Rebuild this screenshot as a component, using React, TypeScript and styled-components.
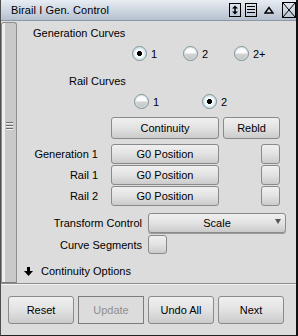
import React from 'react';
import styled, { createGlobalStyle } from 'styled-components';

const GlobalStyle = createGlobalStyle`
  html, body { margin: 0; padding: 0; background: #dcdcdc; }
  body {
    font-family: "Liberation Sans", Arial, sans-serif;
    font-size: 11px;
    color: #000;
  }
`;

const Window = styled.div`
  width: 298px;
  height: 336px;
  box-sizing: border-box;
  display: flex;
  flex-direction: column;
  background: #dcdcdc;
  border-left: 1px solid #4e4e4e;
  border-right: 2px solid #111;
  border-bottom: 1px solid #222;
  overflow: hidden;
`;

const TitleBar = styled.div`
  height: 21px;
  flex: none;
  box-sizing: border-box;
  display: flex;
  align-items: center;
  padding-left: 10px;
  background: linear-gradient(#e8edf3, #b5c0cf);
  border-bottom: 1px solid #8d97a5;
`;

const TitleText = styled.span`
  font-size: 11px;
  letter-spacing: 0.1px;
`;

const TitleIcons = styled.div`
  margin-left: auto;
  display: flex;
  align-items: center;
  height: 100%;
`;

const IconSlot = styled.span<{ $gap: number }>`
  display: flex;
  margin-left: ${p => p.$gap}px;
`;

const Body = styled.div`
  height: 262px;
  flex: none;
  display: flex;
`;

const ScrollTrack = styled.div`
  width: 16px;
  flex: none;
  box-sizing: border-box;
  padding-top: 1px;
  display: flex;
`;

const Thumb = styled.div`
  flex: 1;
  border: 1px solid #8e8e8e;
  border-bottom-color: #7a7a7a;
  border-radius: 3px 3px 0 0;
  background: linear-gradient(to right, #eeeeee 0 3px, #c9c9c9 3px);
  display: flex;
  justify-content: center;
`;

const Grip = styled.div`
  margin-top: 99px;
  width: 7px;
  height: 8px;
  background: repeating-linear-gradient(#6a6a6a 0 1px, #f0f0f0 1px 2px, transparent 2px 3px);
`;

const Content = styled.div`
  flex: 1;
  display: flex;
  flex-direction: column;
  padding-top: 4px;
`;

const SectionLabel = styled.div<{ $indent: number; $top: number }>`
  height: 16px;
  line-height: 16px;
  margin-top: ${p => p.$top}px;
  padding-left: ${p => p.$indent}px;
`;

const RadioRow = styled.div<{ $indent: number; $step: number }>`
  height: 15px;
  margin-top: 5px;
  padding-left: ${p => p.$indent}px;
  display: grid;
  grid-auto-flow: column;
  grid-auto-columns: ${p => p.$step}px;
`;

const RadioItem = styled.label`
  display: flex;
  align-items: center;
  gap: 4px;
`;

const RadioDot = styled.span<{ $on?: boolean }>`
  width: 15px;
  height: 15px;
  box-sizing: border-box;
  border-radius: 50%;
  border: 1px solid #858e92;
  box-shadow: inset 0 0 0 1px #cfe7ee;
  background: ${p =>
    p.$on
      ? 'radial-gradient(circle, #000 0 2.4px, #fafafa 2.8px 4px, #d8ecf1 5px)'
      : 'linear-gradient(#fbfbfb 0 45%, #d2d2d2 55%, #c4c4c4)'};
`;

const ButtonRow = styled.div<{ $top: number; $h: number }>`
  height: ${p => p.$h}px;
  margin-top: ${p => p.$top}px;
  display: flex;
  align-items: stretch;
`;

const RowLabel = styled.div<{ $w: number; $gap: number }>`
  width: ${p => p.$w}px;
  margin-right: ${p => p.$gap}px;
  display: flex;
  align-items: center;
  justify-content: flex-end;
  white-space: nowrap;
`;

const Button = styled.button<{ $w: number; $ml?: number }>`
  width: ${p => p.$w}px;
  margin: 0 0 0 ${p => p.$ml ?? 0}px;
  padding: 0;
  box-sizing: border-box;
  border: 1px solid #8a8a8a;
  border-radius: 3px;
  background: linear-gradient(#f0f0f0, #e2e2e2 50%, #cbcbcb);
  font: inherit;
  color: #000;
  display: flex;
  align-items: center;
  justify-content: center;

  &:disabled {
    border-color: #7c7c7c;
    border-radius: 0;
    background: #dcdcdc;
    color: #909090;
  }
`;

const Dropdown = styled.div`
  width: 138px;
  box-sizing: border-box;
  border: 1px solid #8a8a8a;
  border-radius: 3px;
  background: linear-gradient(#f0f0f0, #e2e2e2 50%, #cbcbcb);
  box-shadow: 0 1px 0 #9a9a9a;
  position: relative;
  display: flex;
  align-items: center;
  justify-content: center;
`;

const Caret = styled.span`
  position: absolute;
  right: 4px;
  top: 5px;
  width: 0;
  height: 0;
  border-left: 3.5px solid transparent;
  border-right: 3.5px solid transparent;
  border-top: 5px solid #555;
`;

const Disclosure = styled.div`
  height: 16px;
  margin-top: 9px;
  padding-left: 7px;
  display: flex;
  align-items: center;
  gap: 8px;
`;

const Separator = styled.div`
  height: 2px;
  flex: none;
  border-top: 1px solid #8c8c8c;
  background: #f2f2f2;
  box-sizing: border-box;
`;

const Footer = styled.div`
  flex: 1;
  display: flex;
  gap: 4px;
  padding: 11px 0 0 7px;
`;

const FooterButton = styled(Button)`
  height: 28px;
`;

const genRows = ['Generation 1', 'Rail 1', 'Rail 2'];

const App: React.FC = () => {
  return (
    <>
      <GlobalStyle />
      <Window>
        <TitleBar>
          <TitleText>Birail I Gen. Control</TitleText>
          <TitleIcons>
            <IconSlot $gap={0}>
              <svg width="12" height="14" viewBox="0 0 12 14">
                <rect x="0.5" y="0.5" width="11" height="13" fill="none" stroke="#000" />
                <line x1="6" y1="4" x2="6" y2="10" stroke="#000" strokeWidth="1.5" />
                <polygon points="3,5.5 6,2.5 9,5.5" fill="#000" />
                <polygon points="3,8.5 6,11.5 9,8.5" fill="#000" />
              </svg>
            </IconSlot>
            <IconSlot $gap={4}>
              <svg width="12" height="14" viewBox="0 0 12 14">
                <rect x="0.5" y="0.5" width="11" height="13" fill="none" stroke="#000" />
                <line x1="2" y1="3.5" x2="10" y2="3.5" stroke="#000" />
                <line x1="2" y1="6.5" x2="10" y2="6.5" stroke="#000" />
                <line x1="2" y1="9.5" x2="10" y2="9.5" stroke="#000" />
              </svg>
            </IconSlot>
            <IconSlot $gap={7}>
              <svg width="10" height="8" viewBox="0 0 10 8">
                <polygon points="1,7 5,1.5 9,7" fill="none" stroke="#000" strokeWidth="1.4" />
              </svg>
            </IconSlot>
            <IconSlot $gap={8}>
              <svg width="14" height="16" viewBox="0 0 14 16">
                <rect x="0.5" y="0.5" width="13" height="15" fill="none" stroke="#000" />
                <line x1="1" y1="1" x2="13" y2="15" stroke="#000" />
                <line x1="13" y1="1" x2="1" y2="15" stroke="#000" />
              </svg>
            </IconSlot>
          </TitleIcons>
        </TitleBar>

        <Body>
          <ScrollTrack>
            <Thumb>
              <Grip />
            </Thumb>
          </ScrollTrack>
          <Content>
            <SectionLabel $indent={16} $top={0}>Generation Curves</SectionLabel>
            <RadioRow $indent={115} $step={51}>
              <RadioItem><RadioDot $on />1</RadioItem>
              <RadioItem><RadioDot />2</RadioItem>
              <RadioItem><RadioDot />2+</RadioItem>
            </RadioRow>

            <SectionLabel $indent={52} $top={12}>Rail Curves</SectionLabel>
            <RadioRow $indent={117} $step={68}>
              <RadioItem><RadioDot />1</RadioItem>
              <RadioItem><RadioDot $on />2</RadioItem>
            </RadioRow>

            <ButtonRow $top={8} $h={22}>
              <Button $w={108} $ml={94}>Continuity</Button>
              <Button $w={57} $ml={4}>Rebld</Button>
            </ButtonRow>

            {genRows.map((label, i) => (
              <ButtonRow key={label} $top={i === 0 ? 5 : 1} $h={20}>
                <RowLabel $w={81} $gap={13}>{label}</RowLabel>
                <Button $w={108}>G0 Position</Button>
                <Button $w={19} $ml={42} />
              </ButtonRow>
            ))}

            <ButtonRow $top={7} $h={20}>
              <RowLabel $w={125} $gap={6}>Transform Control</RowLabel>
              <Dropdown>
                Scale
                <Caret />
              </Dropdown>
            </ButtonRow>

            <ButtonRow $top={2} $h={19}>
              <RowLabel $w={125} $gap={6}>Curve Segments</RowLabel>
              <Button $w={19} />
            </ButtonRow>

            <Disclosure>
              <svg width="9" height="9" viewBox="0 0 9 9">
                <rect x="3" y="0" width="3" height="4" fill="#000" />
                <polygon points="0,4 9,4 4.5,9" fill="#000" />
              </svg>
              <span>Continuity Options</span>
            </Disclosure>
          </Content>
        </Body>

        <Separator />

        <Footer>
          <FooterButton $w={66}>Reset</FooterButton>
          <FooterButton $w={66} disabled>Update</FooterButton>
          <FooterButton $w={66}>Undo All</FooterButton>
          <FooterButton $w={66}>Next</FooterButton>
        </Footer>
      </Window>
    </>
  );
};

export default App;
